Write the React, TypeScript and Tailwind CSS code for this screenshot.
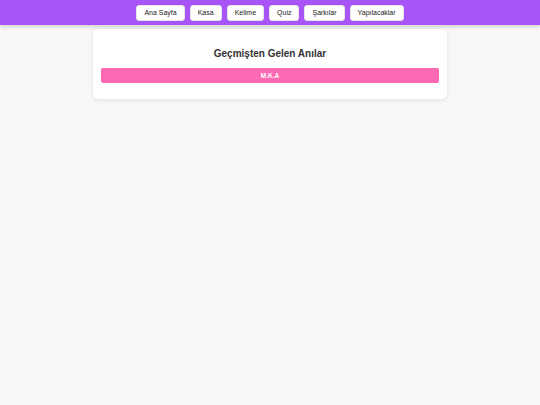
import React from "react";

const links = ["Ana Sayfa", "Kasa", "Kelime", "Quiz", "Şarkılar", "Yapılacaklar"];

export default function App() {
  return (
    <div className="min-h-[405px] bg-[#f8f8f8]" style={{ fontFamily: '"Liberation Sans", Arial, sans-serif' }}>
      <nav className="h-[25px] bg-[#a855f7] flex items-center justify-center gap-[5px] shadow-[0_2px_4px_rgba(0,0,0,0.15)]">
        {links.map((l) => (
          <button
            key={l}
            className="h-[16px] px-[7px] bg-white rounded-[3px] border border-[#e5e5e5] text-[7px] leading-none text-[#222]"
          >
            {l}
          </button>
        ))}
      </nav>
      <div className="w-[354px] mx-auto mt-[4px] bg-white rounded-[5px] shadow-[0_1px_5px_rgba(0,0,0,0.1)] px-[8px] pt-[18px] pb-[16px]">
        <h1 className="text-center text-[10px] font-bold text-[#333] leading-[14px] h-[14px]">Geçmişten Gelen Anılar</h1>
        <div className="mt-[7px] w-full h-[15px] bg-[#ff69b4] rounded-[2px] text-white text-[6.5px] font-bold flex items-center justify-center">
          M.K.A
        </div>
      </div>
    </div>
  );
}
